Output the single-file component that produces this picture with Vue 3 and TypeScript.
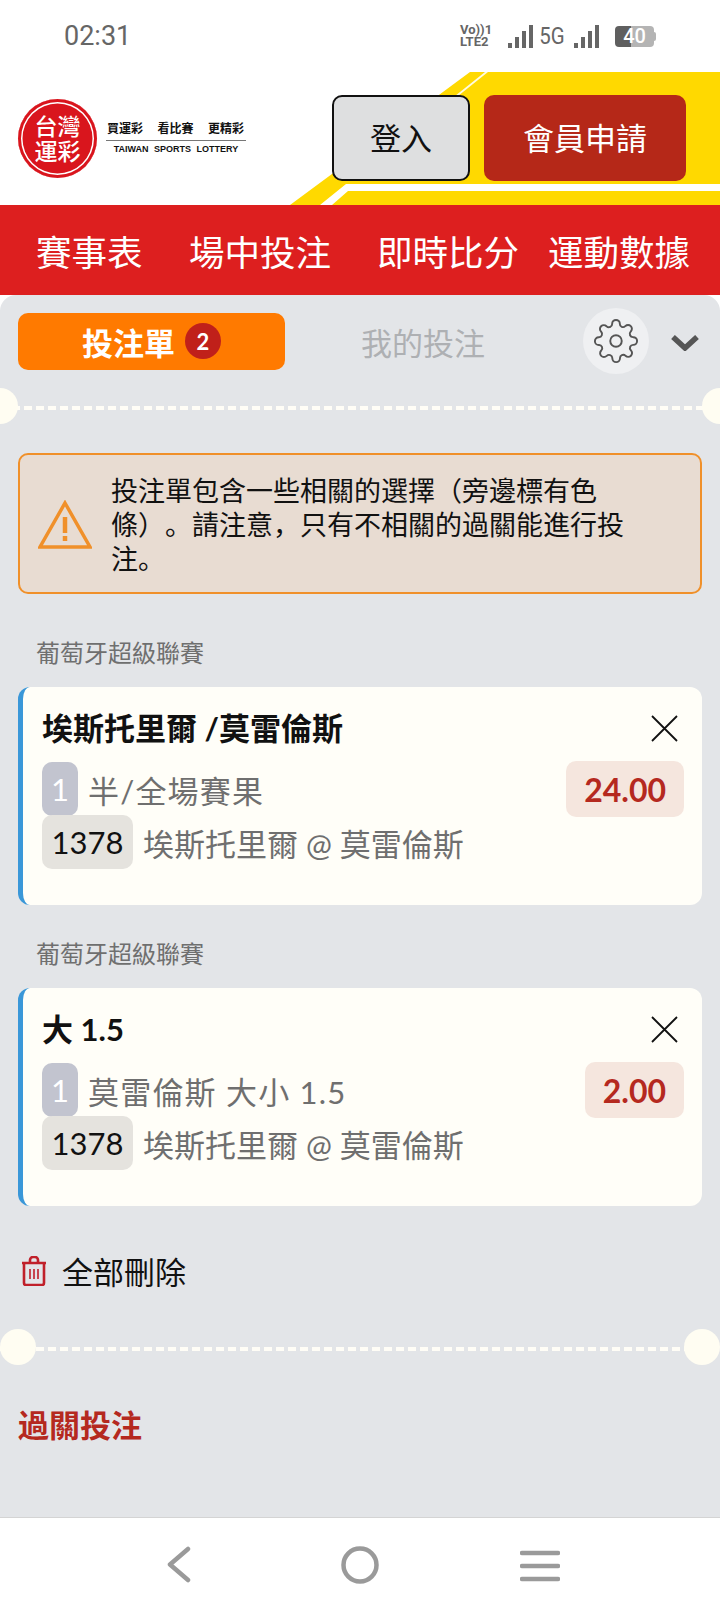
<template>
  <div class="page">
    <div class="status-bar">
      <span class="time">02:31</span>
      <div class="status-icons">
        <div class="volte"><span>Vo))1</span><span>LTE2</span></div>
        <svg class="bars" viewBox="0 0 26 23" width="26" height="23">
          <rect x="0" y="18" width="4" height="5" fill="#666" />
          <rect x="7" y="12" width="4" height="11" fill="#666" />
          <rect x="14" y="6" width="4" height="17" fill="#666" />
          <rect x="21" y="0" width="4" height="23" fill="#666" />
        </svg>
        <span class="five-g">5G</span>
        <svg class="bars" viewBox="0 0 26 23" width="26" height="23">
          <rect x="0" y="18" width="4" height="5" fill="#666" />
          <rect x="7" y="12" width="4" height="11" fill="#666" />
          <rect x="14" y="6" width="4" height="17" fill="#666" />
          <rect x="21" y="0" width="4" height="23" fill="#666" />
        </svg>
        <div class="battery"><span>40</span></div>
      </div>
    </div>

    <header class="header">
      <svg class="stripes" viewBox="0 0 720 133" width="720" height="133">
        <polygon points="470,0 720,0 720,133 290,133" fill="#ffd900" />
        <polygon points="485,0 488,0 458,24 455,24" fill="#fffbe0" />
        <polygon points="320,133 332,133 348,119 720,119 720,112 346,112" fill="#fff" />
      </svg>
      <div class="logo">
        <div class="seal"><span>台灣</span><span>運彩</span></div>
        <div class="slogan">
          <p class="slogan-zh"><span>買運彩</span><span>看比賽</span><span>更精彩</span></p>
          <p class="slogan-en">TAIWAN SPORTS LOTTERY</p>
        </div>
      </div>
      <div class="auth">
        <button class="login">登入</button>
        <button class="signup">會員申請</button>
      </div>
    </header>

    <nav class="nav">
      <span v-for="item in navItems" :key="item">{{ item }}</span>
    </nav>

    <main class="panel">
      <div class="tabs">
        <div class="tab-active">投注單 <span class="count">2</span></div>
        <div class="tab-other">我的投注</div>
        <div class="gear">
          <svg viewBox="0 0 24 24" width="46" height="46" fill="none" stroke="#555" stroke-width="1">
            <circle cx="12" cy="12" r="3" />
            <path d="M19.4 15a1.65 1.65 0 0 0 .33 1.82l.06.06a2 2 0 0 1 0 2.83 2 2 0 0 1-2.83 0l-.06-.06a1.65 1.65 0 0 0-1.82-.33 1.65 1.65 0 0 0-1 1.51V21a2 2 0 0 1-2 2 2 2 0 0 1-2-2v-.09A1.65 1.65 0 0 0 9 19.4a1.65 1.65 0 0 0-1.82.33l-.06.06a2 2 0 0 1-2.83 0 2 2 0 0 1 0-2.83l.06-.06a1.65 1.65 0 0 0 .33-1.82 1.65 1.65 0 0 0-1.51-1H3a2 2 0 0 1-2-2 2 2 0 0 1 2-2h.09A1.65 1.65 0 0 0 4.6 9a1.65 1.65 0 0 0-.33-1.82l-.06-.06a2 2 0 0 1 0-2.83 2 2 0 0 1 2.83 0l.06.06a1.65 1.65 0 0 0 1.82.33H9a1.65 1.65 0 0 0 1-1.51V3a2 2 0 0 1 2-2 2 2 0 0 1 2 2v.09a1.65 1.65 0 0 0 1 1.51 1.65 1.65 0 0 0 1.82-.33l.06-.06a2 2 0 0 1 2.83 0 2 2 0 0 1 0 2.83l-.06.06a1.65 1.65 0 0 0-.33 1.82V9a1.65 1.65 0 0 0 1.51 1H21a2 2 0 0 1 2 2 2 2 0 0 1-2 2h-.09a1.65 1.65 0 0 0-1.51 1z" />
          </svg>
        </div>
        <svg class="chevron" viewBox="0 0 28 16" width="28" height="16" fill="none" stroke="#555" stroke-width="5.5">
          <polyline points="2,2 14,13 26,2" />
        </svg>
      </div>

      <div class="divider divider-top"></div>

      <div class="warning">
        <svg class="warning-icon" viewBox="0 0 54 50" width="54" height="50" fill="none" stroke="#f0902a" stroke-width="3.5">
          <polygon points="27,3 52,47 2,47" />
          <line x1="27" y1="17" x2="27" y2="33" stroke-width="4.5" />
          <line x1="27" y1="36" x2="27" y2="41" stroke-width="4.5" />
        </svg>
        <p>投注單包含一些相關的選擇（旁邊標有色條）。請注意，只有不相關的過關能進行投注。</p>
      </div>

      <section v-for="bet in bets" :key="bet.title" class="bet">
        <p class="league">{{ bet.league }}</p>
        <div class="card">
          <div class="card-title">
            <h3>{{ bet.title }}</h3>
            <svg viewBox="0 0 27 27" width="27" height="27" fill="none" stroke="#111" stroke-width="1.8">
              <path d="M1 1 26 26M26 1 1 26" />
            </svg>
          </div>
          <div class="card-row">
            <span class="num">1</span>
            <span class="market market-top">{{ bet.market }}</span>
            <span class="odds">{{ bet.odds }}</span>
          </div>
          <div class="card-row card-row-second">
            <span class="code">1378</span>
            <span class="market">{{ bet.match }}</span>
          </div>
        </div>
      </section>

      <div class="delete-all">
        <svg viewBox="0 0 26 30" width="26" height="30" fill="none" stroke="#c0202a" stroke-width="2.6">
          <path d="M1 7h24M9 7V4a3 3 0 0 1 3-3h2a3 3 0 0 1 3 3v3" />
          <path d="M3 7v20a2 2 0 0 0 2 2h16a2 2 0 0 0 2-2V7" />
          <path d="M9 13v10M13 13v10M17 13v10" stroke-width="1.6" />
        </svg>
        <span>全部刪除</span>
      </div>

      <div class="divider divider-bottom"></div>

      <h2 class="parlay">過關投注</h2>
    </main>

    <footer class="nav-bar">
      <svg viewBox="0 0 24 37" width="24" height="37" fill="none" stroke="#9a9a9a" stroke-width="4.5" stroke-linecap="round" stroke-linejoin="round">
        <polyline points="21,3 3,18.5 21,34" />
      </svg>
      <svg class="home" viewBox="0 0 38 38" width="38" height="38" fill="none" stroke="#9a9a9a" stroke-width="4.5">
        <circle cx="19" cy="19" r="16.5" />
      </svg>
      <svg class="menu" viewBox="0 0 40 32" width="40" height="32" fill="none" stroke="#9a9a9a" stroke-width="4.5" stroke-linecap="round">
        <path d="M2 3h36M2 16h36M2 29h36" />
      </svg>
    </footer>
  </div>
</template>

<script setup lang="ts">
interface Bet {
  league: string;
  title: string;
  market: string;
  odds: string;
  match: string;
}

const navItems: string[] = ["賽事表", "場中投注", "即時比分", "運動數據"];

const bets: Bet[] = [
  {
    league: "葡萄牙超級聯賽",
    title: "埃斯托里爾 /莫雷倫斯",
    market: "半/全場賽果",
    odds: "24.00",
    match: "埃斯托里爾 @ 莫雷倫斯",
  },
  {
    league: "葡萄牙超級聯賽",
    title: "大 1.5",
    market: "莫雷倫斯 大小 1.5",
    odds: "2.00",
    match: "埃斯托里爾 @ 莫雷倫斯",
  },
];
</script>

<style>
html,
body {
  margin: 0;
  background: #fff;
}
</style>

<style scoped>
.page {
  width: 720px;
  height: 1612px;
  display: flex;
  flex-direction: column;
  overflow: hidden;
  font-family: Lato, "Noto Sans CJK SC", sans-serif;
  background: #fff;
}

p,
h2,
h3 {
  margin: 0;
}

.status-bar {
  height: 72px;
  flex: none;
  display: flex;
  align-items: center;
  justify-content: space-between;
  padding: 0 66px 0 64px;
  box-sizing: border-box;
}

.time {
  font-family: Roboto, sans-serif;
  font-size: 27px;
  color: #666;
}

.status-icons {
  display: flex;
  align-items: center;
  gap: 9px;
}

.volte {
  display: flex;
  flex-direction: column;
  font-family: Roboto, sans-serif;
  font-size: 13px;
  font-weight: 700;
  line-height: 12px;
  color: #666;
  margin-right: 7px;
}

.five-g {
  font-family: Roboto, sans-serif;
  font-size: 24px;
  color: #666;
  transform: scaleX(0.85);
  margin: 0 -2px 0 -6px;
}

.battery {
  position: relative;
  width: 39px;
  height: 21px;
  border-radius: 4px;
  margin-left: 6px;
  background: linear-gradient(90deg, #5f5f5f 0 42%, #b4b4b4 42% 100%);
  display: flex;
  align-items: center;
  justify-content: center;
  font-family: Roboto, sans-serif;
  font-size: 20px;
  font-weight: 500;
  color: #fff;
}

.battery::after {
  content: "";
  position: absolute;
  right: -2px;
  top: 6px;
  width: 2px;
  height: 9px;
  border-radius: 0 2px 2px 0;
  background: #b4b4b4;
}

.header {
  position: relative;
  height: 133px;
  flex: none;
  display: flex;
  align-items: center;
  justify-content: space-between;
  padding: 0 34px 0 18px;
  box-sizing: border-box;
}

.stripes {
  position: absolute;
  left: 0;
  top: 0;
}

.logo {
  position: relative;
  display: flex;
  align-items: center;
  gap: 9px;
}

.seal {
  width: 79px;
  height: 79px;
  box-sizing: border-box;
  border-radius: 50%;
  background: #d9151d;
  box-shadow: inset 0 0 0 3px #d9151d, inset 0 0 0 4.5px #fff;
  display: flex;
  flex-direction: column;
  align-items: center;
  justify-content: center;
  color: #fff;
  font-size: 23px;
  font-weight: 500;
  line-height: 25px;
}

.slogan {
  width: 140px;
  text-align: center;
}

.slogan-zh {
  display: flex;
  justify-content: space-between;
  padding: 0 2px 3px 1px;
  font-size: 12px;
  font-weight: 700;
  line-height: 16px;
  color: #111;
  border-bottom: 1px solid #777;
}

.slogan-en {
  font-family: "Liberation Sans", sans-serif;
  font-size: 9px;
  font-weight: 700;
  line-height: 16px;
  word-spacing: 3px;
  color: #111;
}

.auth {
  position: relative;
  display: flex;
  gap: 14px;
  margin-top: -1px;
}

.auth button {
  height: 86px;
  border-radius: 10px;
  font-family: inherit;
  font-size: 31px;
  padding: 0 0 4px;
  box-sizing: border-box;
}

.login {
  width: 138px;
  background: #dedfe0;
  border: 2px solid #111;
  color: #111;
}

.signup {
  width: 202px;
  background: #b52818;
  border: 0;
  color: #fff;
}

.nav {
  height: 90px;
  flex: none;
  display: grid;
  grid-template-columns: 153px 188px 171px 1fr;
  align-items: center;
  padding-left: 36px;
  background: #dd1f1f;
  color: #fff;
  font-size: 35.5px;
  white-space: nowrap;
}

.panel {
  flex: 1;
  background: #e3e5e8;
  border-radius: 16px 16px 0 0;
  border-bottom: 1px solid #d4d4d4;
}

.tabs {
  display: flex;
  align-items: center;
  padding: 13px 21px 0 18px;
}

.tab-active {
  width: 267px;
  height: 57px;
  border-radius: 10px;
  background: #ff7a00;
  color: #fff;
  font-size: 31px;
  font-weight: 700;
  display: flex;
  align-items: center;
  justify-content: center;
  gap: 10px;
}

.count {
  width: 36px;
  height: 36px;
  border-radius: 50%;
  background: #c0201a;
  font-size: 22px;
  display: flex;
  align-items: center;
  justify-content: center;
}

.tab-other {
  flex: 1;
  padding-right: 22px;
  text-align: center;
  color: #aeb0b3;
  font-size: 31px;
  font-weight: 400;
}

.gear {
  width: 66px;
  height: 66px;
  border-radius: 50%;
  background: #eff0f2;
  display: flex;
  align-items: center;
  justify-content: center;
}

.chevron {
  margin: 4px 0 0 22px;
}

.divider {
  position: relative;
  height: 4px;
  background: repeating-linear-gradient(90deg, #fffdf6 0 8px, transparent 8px 12px);
}

.divider::before,
.divider::after {
  content: "";
  position: absolute;
  top: -18px;
  width: 36px;
  height: 36px;
  border-radius: 50%;
  background: #fffdf2;
}

.divider-top {
  margin-top: 32px;
}

.divider-top::before {
  left: -18px;
}

.divider-top::after {
  right: -18px;
}

.divider-bottom {
  margin-top: 54px;
}

.divider-bottom::before {
  left: 0;
}

.divider-bottom::after {
  right: 0;
}

.warning {
  margin: 43px 18px 0;
  height: 141px;
  box-sizing: border-box;
  border: 2px solid #f0902a;
  border-radius: 10px;
  background: #e8dcd2;
  display: flex;
  align-items: center;
  padding-left: 18px;
  padding-top: 3px;
  gap: 19px;
}

.warning-icon {
  flex: none;
}

.warning p {
  width: 520px;
  font-size: 27px;
  line-height: 34px;
  color: #111;
  text-spacing-trim: space-all;
}

.bet {
  margin-top: 32px;
}

.warning + .bet {
  margin-top: 42px;
}

.league {
  padding-left: 36px;
  font-size: 24px;
  line-height: 34px;
  color: #6f6f6f;
  margin-bottom: 17px;
}

.card {
  margin: 0 18px;
  height: 218px;
  box-sizing: border-box;
  padding: 22px 18px 0 19px;
  border-left: 5px solid #3a97d8;
  border-radius: 12px;
  background: #fffef8;
}

.card-title {
  display: flex;
  align-items: center;
  justify-content: space-between;
  height: 38px;
  margin-bottom: 15px;
  padding-right: 6px;
}

.card-title h3 {
  font-size: 31px;
  font-weight: 700;
  color: #111;
  white-space: nowrap;
  margin-bottom: 4px;
}

.card-row {
  display: flex;
  align-items: center;
  height: 54px;
  font-size: 31px;
}

.card-row-second {
  margin-top: -1px;
}

.num {
  width: 36px;
  height: 54px;
  border-radius: 10px;
  background: #c2c4cf;
  color: #fff;
  display: flex;
  align-items: center;
  justify-content: center;
}

.code {
  width: 91px;
  height: 54px;
  border-radius: 10px;
  background: #e5e3de;
  color: #111;
  display: flex;
  align-items: center;
  justify-content: center;
}

.market {
  margin-left: 10px;
  color: #6f6f6f;
}

.market-top {
  letter-spacing: 1.2px;
}

.odds {
  margin-left: auto;
  height: 56px;
  padding: 0 18px;
  border-radius: 10px;
  background: #f5e6de;
  color: #b5291f;
  font-size: 32px;
  font-weight: 700;
  display: flex;
  align-items: center;
}

.delete-all {
  display: flex;
  align-items: center;
  gap: 15px;
  margin: 42px 0 0 21px;
  font-size: 31px;
  color: #111;
}

.parlay {
  margin: 50px 0 0 18px;
  font-size: 31px;
  font-weight: 700;
  color: #b5291f;
}

.nav-bar {
  flex: none;
  height: 94px;
  box-sizing: border-box;
  padding: 28px 160px 0 167px;
  display: flex;
  align-items: flex-start;
  justify-content: space-between;
}

.home {
  margin-left: 9px;
}

.menu {
  margin-top: 4px;
}
</style>
